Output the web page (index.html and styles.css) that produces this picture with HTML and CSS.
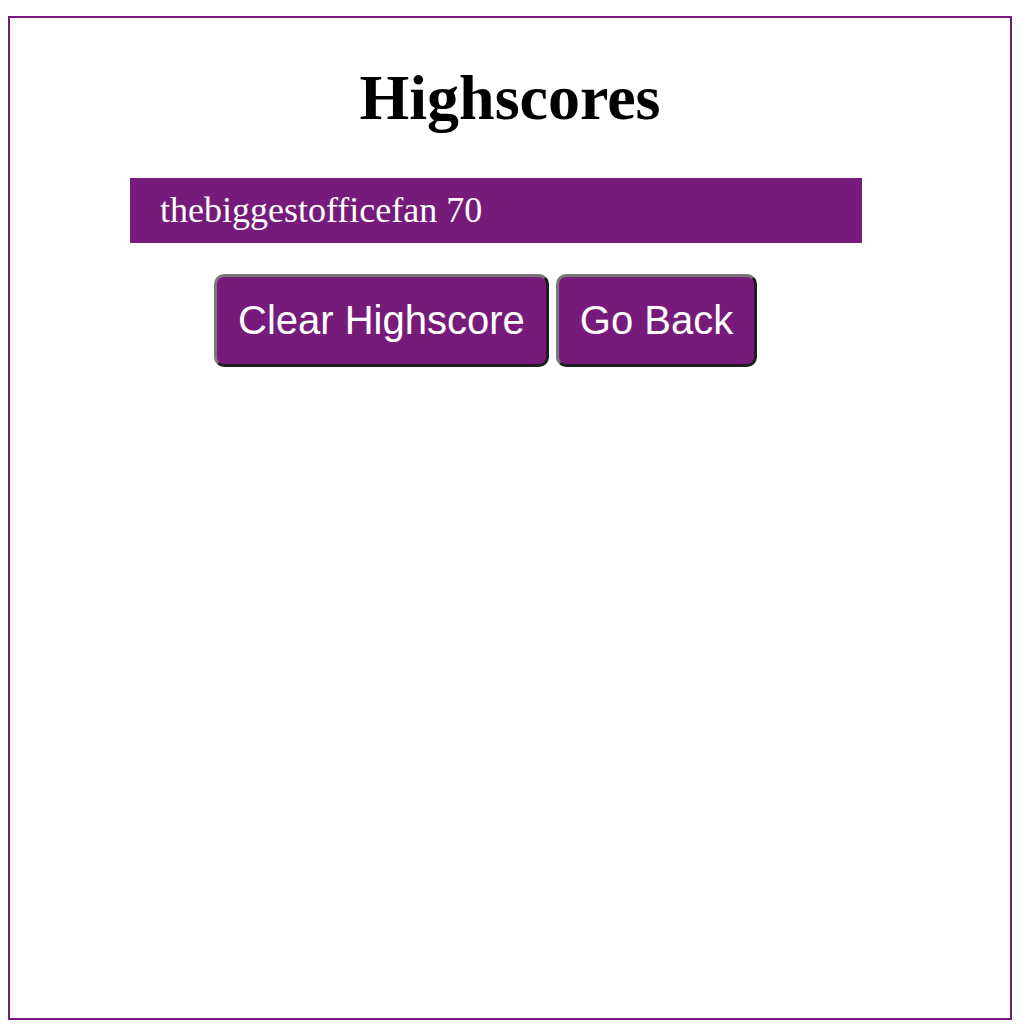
FILE: index.html
```html
<!DOCTYPE html>
<html lang="en">
<head>
<meta charset="utf-8">
<title>Highscores</title>
<link rel="stylesheet" href="styles.css">
</head>
<body>
<main class="frame">
  <h1 class="title">Highscores</h1>
  <ul class="scores">
    <li class="score">thebiggestofficefan 70</li>
  </ul>
  <div class="actions">
    <button class="btn" type="button">Clear Highscore</button>
    <button class="btn" type="button">Go Back</button>
  </div>
</main>
</body>
</html>
```

FILE: styles.css
```css
body {
  margin: 8px;
  font-family: "Liberation Serif", "Times New Roman", serif;
  background: #ffffff;
}

.frame {
  box-sizing: border-box;
  width: 1004px;
  height: 1004px;
  margin-top: 8px;
  border: 2px solid #771b7a;
}

.title {
  margin: 43px 0;
  font-size: 64px;
  font-weight: bold;
  text-align: center;
  color: #000;
}

.scores {
  list-style: none;
  margin: 0 0 31px 120px;
  padding: 0;
  width: 732px;
}

.score {
  background: #771b7a;
  color: #fff;
  font-size: 36px;
  line-height: 41px;
  padding: 12px 30px;
}

.actions {
  display: flex;
  gap: 7px;
  margin-left: 204px;
}

.btn {
  font-family: "Liberation Sans", Arial, sans-serif;
  font-size: 40px;
  line-height: 46px;
  color: #fff;
  background: #771b7a;
  padding: 20px 21px 21px;
  border: 3px solid;
  border-color: #787878 #1e1e1e #1e1e1e #787878;
  border-radius: 10px;
}
```
